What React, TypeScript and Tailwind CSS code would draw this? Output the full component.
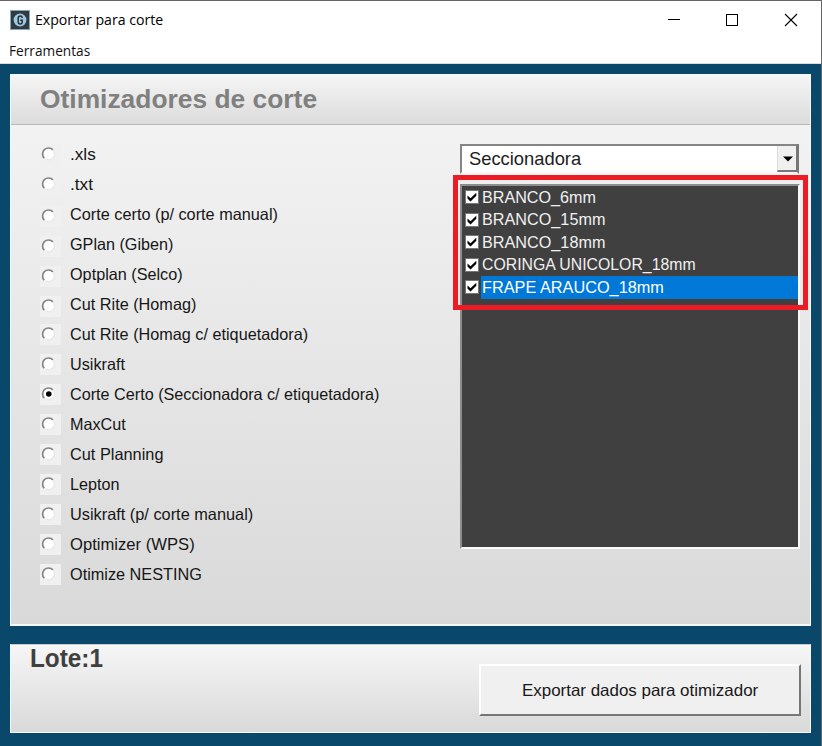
import { useLayoutEffect, useRef, useState } from "react";

const optimizers = [
  { label: ".xls", width: 26 },
  { label: ".txt", width: 23 },
  { label: "Corte certo (p/ corte manual)", width: 208, low: true },
  { label: "GPlan (Giben)", width: 103, low: true },
  { label: "Optplan (Selco)", width: 113, low: true },
  { label: "Cut Rite (Homag)", width: 126, low: true },
  { label: "Cut Rite (Homag c/ etiquetadora)", width: 238 },
  { label: "Usikraft", width: 55 },
  { label: "Corte Certo (Seccionadora c/ etiquetadora)", width: 310 },
  { label: "MaxCut", width: 56 },
  { label: "Cut Planning", width: 93 },
  { label: "Lepton", width: 49 },
  { label: "Usikraft (p/ corte manual)", width: 183 },
  { label: "Optimizer (WPS)", width: 125 },
  { label: "Otimize NESTING", width: 132 },
];

const materials = [
  { label: "BRANCO_6mm", width: 114 },
  { label: "BRANCO_15mm", width: 123 },
  { label: "BRANCO_18mm", width: 123 },
  { label: "CORINGA UNICOLOR_18mm", width: 214 },
  { label: "FRAPE ARAUCO_18mm", width: 182 },
];

/* A single line of text condensed or widened to an exact advance width. */
function Label({ text, width, className = "" }: { text: string; width: number; className?: string }) {
  const ref = useRef<HTMLSpanElement>(null);
  const [scale, setScale] = useState(1);
  useLayoutEffect(() => {
    if (ref.current) setScale(width / ref.current.offsetWidth);
  }, [text, width]);
  return (
    <div className={"shrink-0 whitespace-nowrap " + className} style={{ width }}>
      <span ref={ref} className="inline-block origin-left" style={{ transform: `scaleX(${scale})` }}>
        {text}
      </span>
    </div>
  );
}

function Radio({ checked }: { checked: boolean }) {
  return (
    <svg width="21" height="21" className="block bg-[#f0f0f0]">
      <circle cx="8.7" cy="10" r="5.8" fill="#fff" />
      <path d="M4.3 14.2A6 6 0 1 1 12.9 5.8" fill="none" stroke="#858585" strokeWidth="1.7" />
      <path d="M13.6 6.9A5.8 5.8 0 0 1 5.5 14.8" fill="none" stroke="#e3e3e3" strokeWidth="1" />
      {checked && <circle cx="8.8" cy="10" r="2.8" fill="#000" />}
    </svg>
  );
}

function CheckBox() {
  return (
    <svg width="14" height="14" className="block shrink-0">
      <rect x=".5" y=".5" width="13" height="13" fill="#fff" stroke="#777" />
      <path d="M2.5 5.5L5.5 8.3L11.3 2.7V5.8L5.5 11.6L2.5 8.6Z" fill="#000" />
    </svg>
  );
}

export default function App() {
  return (
    <div className="flex h-[746px] w-[822px] flex-col overflow-hidden border-t border-r border-[#666] bg-[#09476b] font-['Liberation_Sans',Arial,sans-serif] text-black">
      <header className="h-[63px] shrink-0 border-b border-[#d8dde0] bg-white font-['Open_Sans','Noto_Sans',sans-serif]">
        <div className="flex h-[37px] items-center pl-[10px]">
          <svg width="20" height="20" viewBox="0 0 20 20" className="mr-[5px] block">
            <rect x=".5" y=".5" width="19" height="19" fill="#343941" stroke="#7fa9bd" />
            <circle cx="10" cy="10" r="6.4" fill="#9bc9df" />
            <path d="M12.2 8V7.4Q12 6 10.3 6Q8.2 6 8.2 8.3V11.7Q8.2 14 10.2 14Q12.2 14 12.2 11.7V10.3H10.2" fill="none" stroke="#2b3038" strokeWidth="1.5" />
          </svg>
          <Label text="Exportar para corte" width={128} className="-mt-px text-[15px] leading-5" />
          <div className="ml-auto pr-[23px]">
            <svg width="131" height="14" shapeRendering="crispEdges" className="block">
              <path d="M1 6.5H13M59.5 1.5H70.5V12.5H59.5Z" fill="none" stroke="#000" />
              <path d="M118 1L130 13M130 1L118 13" fill="none" stroke="#000" shapeRendering="auto" strokeWidth="1.1" />
            </svg>
          </div>
        </div>
        <Label text="Ferramentas" width={81} className="ml-[9px] pt-px text-[14px] leading-6 text-[#111]" />
      </header>

      <main className="mx-[10px] mt-[10px] flex h-[552px] w-[801px] shrink-0 flex-col border border-b-2 border-[#f5f7f8] bg-linear-to-b from-[#f5f5f5] to-[#d9d9d9]">
        <div className="h-[50px] shrink-0 border-b border-[#b9b9b9] bg-linear-to-b from-[#f5f5f5] to-[#dcdcdc] pl-[29px]">
          <Label text="Otimizadores de corte" width={277} className="text-[26px] leading-[48px] font-bold text-[#808080]" />
        </div>
        <div className="flex">
          <div className="ml-[29px] w-[420px] pt-[19px]">
            {optimizers.map((item, index) => (
              <div key={item.label} className="flex h-[30px] items-start">
                <div className={item.low ? "pt-[2px]" : ""}>
                  <Radio checked={index === 8} />
                </div>
                <Label text={item.label} width={item.width} className="ml-[9px] text-[16.5px] leading-[21px] text-[#161616]" />
              </div>
            ))}
          </div>

          <div className="pt-[19px]">
            <div className="flex h-[30px] w-[339px] border-2 border-t-[#858585] border-r-[#777] border-b-[#f5f5f5] border-l-[#858585] bg-white">
              <Label text="Seccionadora" width={112} className="ml-[7px] text-[18.5px] leading-[26px] text-[#202020]" />
              <div className="ml-auto flex w-[20px] items-center justify-center border-r border-b-2 border-l border-r-[#777] border-b-[#777] border-l-[#ddd] bg-[#f0f0f0] pt-[2px] pl-px">
                <svg width="10" height="6"><path d="M0 0.5H10L5 5.5Z" /></svg>
              </div>
            </div>
            <div className="relative mt-[10px] h-[365px] w-[340px] border-2 border-t-[#8d8d8d] border-r-[#f9f9f9] border-b-[#f9f9f9] border-l-[#8d8d8d] bg-[#404040]">
              {materials.map((item, index) => (
                <div key={item.label} className="flex h-[22.5px] items-center">
                  <div className="pr-[2px] pl-[3px]"><CheckBox /></div>
                  <div className={index === 4 ? "flex h-[22.5px] flex-1 items-center bg-[#0078d7] pt-px pl-px text-white" : "flex h-[22.5px] flex-1 items-center pt-px pl-px text-[#f0f0f0]"}>
                    <Label text={item.label} width={item.width} className="text-[17px] leading-[22px]" />
                  </div>
                </div>
              ))}
              <div className="absolute -top-[11px] -left-[9px] h-[135px] w-[355px] border-[5px] border-[#ed1c24]" />
            </div>
          </div>
        </div>
      </main>

      <footer className="mx-[10px] mt-[18px] flex h-[89px] w-[801px] shrink-0 justify-between border border-[#f5f7f8] border-t-[#c5cdd2] bg-linear-to-b from-[#f6f6f6] to-[#d9d9d9]">
        <Label text="Lote:1" width={73} className="ml-[19px] text-[25px] leading-[27px] font-bold text-[#404040]" />
        <button className="mt-[19px] mr-[9px] flex h-[52px] w-[322px] items-center justify-center border-2 border-t-white border-r-[#777] border-b-[#777] border-l-white bg-[#f0f0f0] pb-px text-left text-[#181818]">
          <Label text="Exportar dados para otimizador" width={236} className="text-[16.5px] leading-[22px]" />
        </button>
      </footer>
    </div>
  );
}
